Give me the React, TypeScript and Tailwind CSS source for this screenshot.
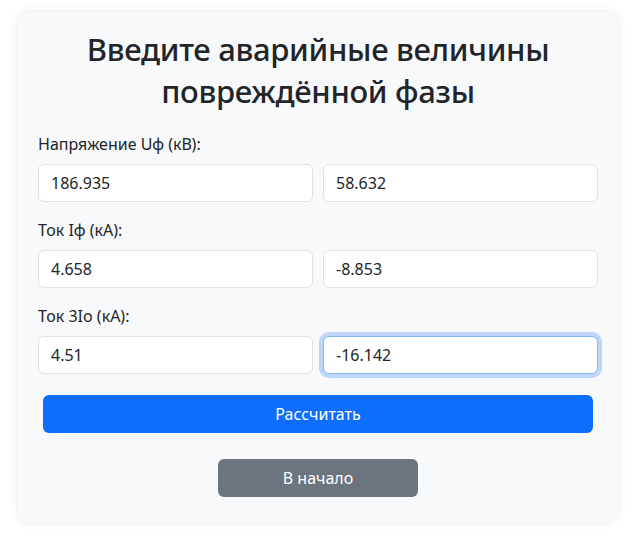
import { useState } from "react";

const font = { fontFamily: '"Noto Sans", "Open Sans", sans-serif' };

function Field({
  value,
  focused,
}: {
  value: string;
  focused?: boolean;
}) {
  const [val, setVal] = useState(value);
  return (
    <input
      type="text"
      value={val}
      onChange={(e) => setVal(e.target.value)}
      className={`w-full h-[38px] px-3 rounded-[6px] bg-white text-[16px] text-[#212529] outline-none border ${
        focused
          ? "border-[#86b7fe] shadow-[0_0_0_4px_rgba(13,110,253,0.25)]"
          : "border-[#dee2e6]"
      }`}
    />
  );
}

function Group({
  label,
  a,
  b,
  focusSecond,
}: {
  label: string;
  a: string;
  b: string;
  focusSecond?: boolean;
}) {
  return (
    <div className="mb-4">
      <label className="block mb-2 text-[16px] leading-6 text-[#212529]">{label}</label>
      <div className="grid grid-cols-2 gap-[10px]">
        <Field value={a} />
        <Field value={b} focused={focusSecond} />
      </div>
    </div>
  );
}

export default function App() {
  return (
    <div className="min-h-screen bg-white pt-3 px-[18px]" style={font}>
      <div className="w-[600px] rounded-[12px] bg-[#f8f9fa] shadow-[0_0_10px_rgba(0,0,0,0.1)] px-5 pt-4 pb-[25px]">
        <h2 className="text-center text-[31px] tracking-[-0.3px] leading-[42px] font-medium text-[#212529] mb-5">
          Введите аварийные величины
          <br />
          повреждённой фазы
        </h2>

        <Group label="Напряжение Uф (кВ):" a="186.935" b="58.632" />
        <Group label="Ток Iф (кА):" a="4.658" b="-8.853" />
        <Group label="Ток 3Io (кА):" a="4.51" b="-16.142" focusSecond />

        <div className="px-[5px] pt-[5px]">
          <button className="w-full h-[38px] rounded-[6px] bg-[#0d6efd] text-white text-[16px]">
            Рассчитать
          </button>
        </div>

        <div className="flex justify-center mt-[26px]">
          <button className="w-[200px] h-[38px] rounded-[6px] bg-[#6c757d] text-white text-[16px]">
            В начало
          </button>
        </div>
      </div>
    </div>
  );
}
